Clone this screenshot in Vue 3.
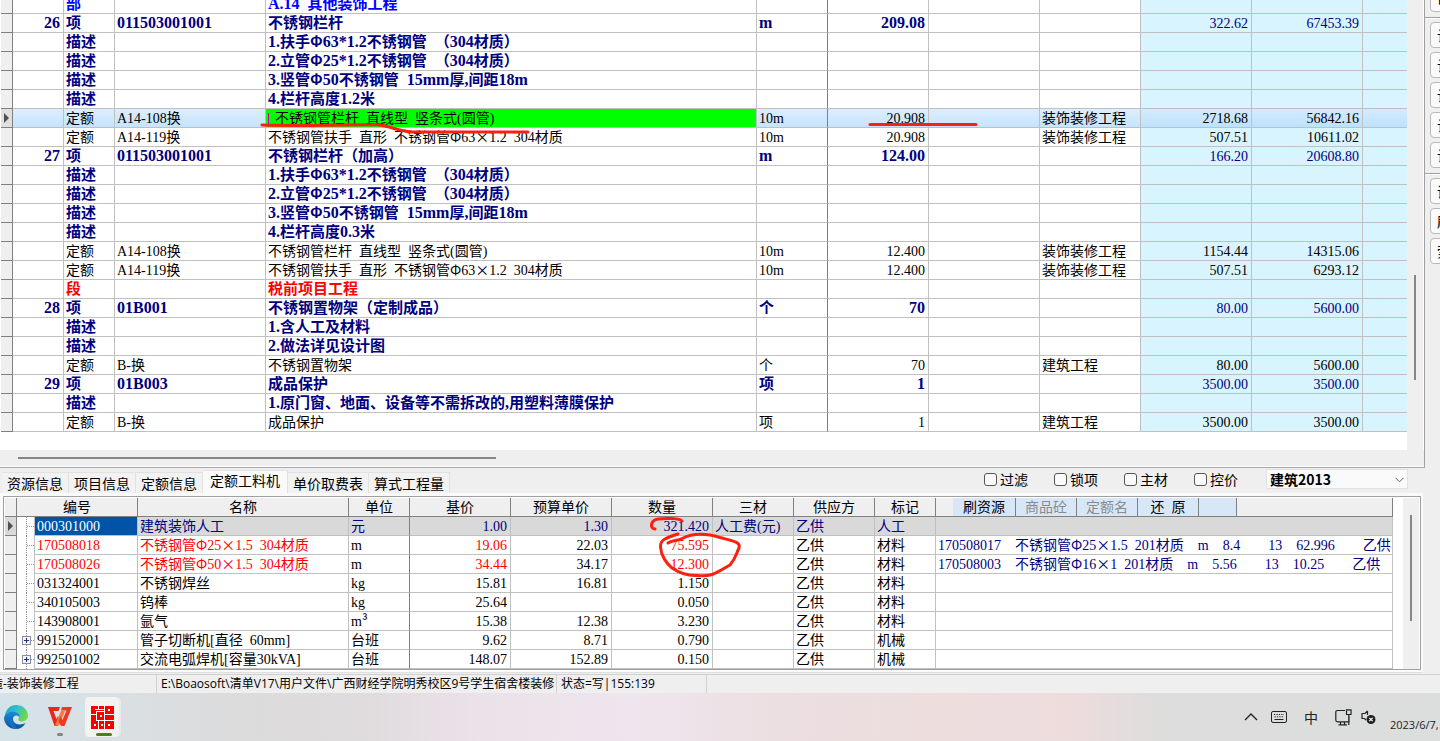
<script setup>
import { h, ref } from 'vue'

// Splits mixed text into Latin and Chinese runs so that each gets its own face.
const Mixed = (props) =>
  (props.t || '').match(/[ -~]+|[^ -~]+/g)?.map((run) =>
    h('span', { class: /^[ -~]/.test(run) ? 'latin' : 'han' }, run.replace(/ /g, '\u2002'))
  )
Mixed.props = ['t']

const item = (no, code, name, unit, qty, price, total) => ({ kind: 'item', no, type: '项', code, name, unit, qty, price, total })
const note = (name) => ({ kind: 'note', type: '描述', name })
const quota = (code, name, unit, qty, cls, price, total, active) => ({ kind: 'quota', type: '定额', code, name, unit, qty, cls, price, total, active })

const rows = [
  { kind: 'part', type: '部', name: 'A.14 其他装饰工程' },
  item('26', '011503001001', '不锈钢栏杆', 'm', '209.08', '322.62', '67453.39'),
  note('1.扶手Φ63*1.2不锈钢管 （304材质）'),
  note('2.立管Φ25*1.2不锈钢管 （304材质）'),
  note('3.竖管Φ50不锈钢管 15mm厚,间距18m'),
  note('4.栏杆高度1.2米'),
  quota('A14-108换', '不锈钢管栏杆 直线型 竖条式(圆管)', '10m', '20.908', '装饰装修工程', '2718.68', '56842.16', true),
  quota('A14-119换', '不锈钢管扶手 直形 不锈钢管Φ63×1.2 304材质', '10m', '20.908', '装饰装修工程', '507.51', '10611.02'),
  item('27', '011503001001', '不锈钢栏杆（加高）', 'm', '124.00', '166.20', '20608.80'),
  note('1.扶手Φ63*1.2不锈钢管 （304材质）'),
  note('2.立管Φ25*1.2不锈钢管 （304材质）'),
  note('3.竖管Φ50不锈钢管 15mm厚,间距18m'),
  note('4.栏杆高度0.3米'),
  quota('A14-108换', '不锈钢管栏杆 直线型 竖条式(圆管)', '10m', '12.400', '装饰装修工程', '1154.44', '14315.06'),
  quota('A14-119换', '不锈钢管扶手 直形 不锈钢管Φ63×1.2 304材质', '10m', '12.400', '装饰装修工程', '507.51', '6293.12'),
  { kind: 'section', type: '段', name: '税前项目工程' },
  item('28', '01B001', '不锈钢置物架（定制成品）', '个', '70', '80.00', '5600.00'),
  note('1.含人工及材料'),
  note('2.做法详见设计图'),
  quota('B-换', '不锈钢置物架', '个', '70', '建筑工程', '80.00', '5600.00'),
  item('29', '01B003', '成品保护', '项', '1', '3500.00', '3500.00'),
  note('1.原门窗、地面、设备等不需拆改的,用塑料薄膜保护'),
  quota('B-换', '成品保护', '项', '1', '建筑工程', '3500.00', '3500.00')
]

const tabs = ['资源信息', '项目信息', '定额信息', '定额工料机', '单价取费表', '算式工程量']
const activeTab = ref('定额工料机')
const filters = ['过滤', '锁项', '主材', '控价']
const heads = ['编号', '名称', '单位', '基价', '预算单价', '数量', '三材', '供应方', '标记']
const tools = [
  { t: '刷资源' },
  { t: '商品砼', off: true },
  { t: '定额名', off: true },
  { t: '还\u2002原' }
]

const parts = [
  { code: '000301000', name: '建筑装饰人工', unit: '元', base: '1.00', budget: '1.30', qty: '321.420', three: '人工费(元)', by: '乙供', tag: '人工', cur: true },
  { code: '170508018', name: '不锈钢管Φ25×1.5 304材质', unit: 'm', base: '19.06', budget: '22.03', qty: '75.595', by: '乙供', tag: '材料', red: true, alt: '170508017  不锈钢管Φ25×1.5 201材质  m  8.4    13  62.996    乙供' },
  { code: '170508026', name: '不锈钢管Φ50×1.5 304材质', unit: 'm', base: '34.44', budget: '34.17', qty: '12.300', by: '乙供', tag: '材料', red: true, alt: '170508003  不锈钢管Φ16×1 201材质  m  5.56    13  10.25    乙供' },
  { code: '031324001', name: '不锈钢焊丝', unit: 'kg', base: '15.81', budget: '16.81', qty: '1.150', by: '乙供', tag: '材料' },
  { code: '340105003', name: '钨棒', unit: 'kg', base: '25.64', budget: '', qty: '0.050', by: '乙供', tag: '材料' },
  { code: '143908001', name: '氩气', unit: 'm³', base: '15.38', budget: '12.38', qty: '3.230', by: '乙供', tag: '材料' },
  { code: '991520001', name: '管子切断机[直径 60mm]', unit: '台班', base: '9.62', budget: '8.71', qty: '0.790', by: '乙供', tag: '机械', node: true },
  { code: '992501002', name: '交流电弧焊机[容量30kVA]', unit: '台班', base: '148.07', budget: '152.89', qty: '0.150', by: '乙供', tag: '机械', node: true }
]

const sideGroups = [['审'], ['计', '计', '计', '计', '计'], ['调', '刷', '索']]
</script>

<template>
  <div class="app">
    <div class="upper">
      <div class="main-grid">
        <div class="main-row">
          <div class="sheet">
            <table class="bill">
              <colgroup>
                <col class="w12" /><col class="w51" /><col class="w51" /><col class="w151" /><col />
                <col class="w71" /><col class="w101" /><col class="w111" /><col class="w101" />
                <col class="w111" /><col class="w111" /><col class="w44" />
              </colgroup>
              <tbody>
                <tr v-for="(r, i) in rows" :key="i" :class="[r.kind, { active: r.active }]">
                  <td class="mark"><div class="c"><svg v-if="r.active" width="6" height="10" viewBox="0 0 6 10"><path d="M0 0L5 5L0 10Z" fill="#505050" /></svg></div></td>
                  <td class="r"><div class="c"><Mixed :t="r.no" /></div></td>
                  <td><div class="c">{{ r.type }}</div></td>
                  <td><div class="c"><Mixed :t="r.code" /></div></td>
                  <td class="name"><div class="c"><i v-if="r.active" class="caret"></i><Mixed :t="r.name" /></div></td>
                  <td class="dark"><div class="c"><Mixed :t="r.unit" /></div></td>
                  <td class="r"><div class="c"><Mixed :t="r.qty" /></div></td>
                  <td><div class="c"></div></td>
                  <td><div class="c">{{ r.cls }}</div></td>
                  <td class="r money"><div class="c"><Mixed :t="r.price" /></div></td>
                  <td class="r money"><div class="c"><Mixed :t="r.total" /></div></td>
                  <td class="money last"><div class="c"></div></td>
                </tr>
              </tbody>
            </table>
          </div>
          <div class="vbar"><div class="vthumb"></div></div>
        </div>
        <div class="hbar"><div class="hthumb"></div></div>
      </div>
      <aside class="side">
        <div v-for="(g, i) in sideGroups" :key="i" class="side-group">
          <button v-for="(b, j) in g" :key="j" type="button">{{ b }}</button>
        </div>
      </aside>
    </div>

    <div class="lower">
      <div class="tabbar">
        <div class="tabs" role="tablist">
          <button v-for="t in tabs" :key="t" type="button" role="tab" class="tab" :class="{ on: t === activeTab }" @click="activeTab = t">{{ t }}</button>
        </div>
        <div class="options">
          <label v-for="f in filters" :key="f"><input type="checkbox" />{{ f }}</label>
          <div class="combo">
            <select aria-label="定额库"><option>建筑2013</option></select>
            <svg width="9" height="6" viewBox="0 0 9 6"><path d="M.5 .8L4.5 4.8L8.5 .8" fill="none" stroke="#606060" /></svg>
          </div>
        </div>
      </div>
      <div class="frame">
        <div class="inner">
          <div class="parts-wrap">
            <table class="parts">
              <colgroup>
                <col class="w12" /><col class="w121" /><col class="w211" /><col class="w61" /><col class="w101" />
                <col class="w101" /><col class="w101" /><col class="w81" /><col class="w81" /><col class="w61" /><col />
              </colgroup>
              <thead>
                <tr>
                  <th></th>
                  <th v-for="t in heads" :key="t"><div class="c">{{ t }}</div></th>
                  <th class="tool-cell">
                    <div class="tools">
                      <button v-for="b in tools" :key="b.t" type="button" :disabled="b.off">{{ b.t }}</button>
                    </div>
                  </th>
                </tr>
              </thead>
              <tbody>
                <tr v-for="p in parts" :key="p.code" :class="{ cur: p.cur, red: p.red }">
                  <td class="mark"><div class="c"><svg v-if="p.cur" width="6" height="10" viewBox="0 0 6 10"><path d="M0 0L5 5L0 10Z" fill="#505050" /></svg></div></td>
                  <td class="code">
                    <div class="c">
                      <svg class="tree" width="18" height="19" viewBox="0 0 18 19" shape-rendering="crispEdges">
                        <path d="M9.5 0V19M10 9.5H17" stroke="#909090" stroke-dasharray="1 1" fill="none" />
                        <path d="M17.5 0V19" stroke="#c0c0c0" />
                        <g v-if="p.node"><rect x="5.500" y="5.500" width="8" height="8" fill="#f4f4f8" stroke="#8c8c9c" /><path d="M7 9.500H12M9.500 7V12" stroke="#203080" /></g>
                      </svg>
                      <span class="code-text"><Mixed :t="p.code" /></span>
                    </div>
                  </td>
                  <td class="tone"><div class="c"><Mixed :t="p.name" /></div></td>
                  <td class="dark"><div class="c"><Mixed :t="p.unit" /></div></td>
                  <td class="r tone"><div class="c"><Mixed :t="p.base" /></div></td>
                  <td class="r"><div class="c"><Mixed :t="p.budget" /></div></td>
                  <td class="r tone"><div class="c"><Mixed :t="p.qty" /></div></td>
                  <td><div class="c"><Mixed :t="p.three" /></div></td>
                  <td><div class="c">{{ p.by }}</div></td>
                  <td><div class="c">{{ p.tag }}</div></td>
                  <td class="alt"><div class="c"><Mixed :t="p.alt" /></div></td>
                </tr>
              </tbody>
            </table>
          </div>
          <div class="vbar2"><div class="vthumb2"></div></div>
        </div>
      </div>
    </div>

    <footer class="status">
      <div class="s1"><span>造-装饰装修工程</span></div>
      <div class="s2">E:\Boaosoft\清单V17\用户文件\广西财经学院明秀校区9号学生宿舍楼装修</div>
      <div class="s3">状态=写|155:139</div>
    </footer>

    <div class="taskbar">
      <div class="pins">
        <button type="button" aria-label="Edge">
          <svg width="24" height="24" viewBox="0 0 24 24">
            <defs>
              <linearGradient id="eg" x1="0" y1="0" x2="1" y2=".4"><stop offset="0" stop-color="#1ba0e0" /><stop offset=".6" stop-color="#36c3c0" /><stop offset="1" stop-color="#6fd84c" /></linearGradient>
              <linearGradient id="eb" x1="0" y1="0" x2="0" y2="1"><stop offset="0" stop-color="#1a8ad8" /><stop offset="1" stop-color="#0c52a0" /></linearGradient>
            </defs>
            <path d="M1 10C2 4 6.500 0 12 0C19 0 24 5 24 10.500C24 14 21 16.500 18 16.500C15 16.500 13.500 15 14.500 13.800C16.500 11 13 7.500 9 7.500C5 7.500 2 9.500 0 13Z" fill="url(#eg)" />
            <path d="M0 13C1.500 8.500 5 6.800 9 6.800C13 6.800 16 9.500 15.500 12C12 9 9 11 9 14C9 18 14 21.500 21.500 18C19.500 22 16 24 12 24C5 24 0 19 0 13Z" fill="url(#eb)" />
            <path d="M10 10.500C7 14 8 20 14 23.800C10 24.500 5 21 5 16C5 13 7 11 10 10.500Z" fill="#1673c4" />
          </svg>
        </button>
        <button type="button" aria-label="WPS">
          <svg width="24" height="20" viewBox="0 0 24 20">
            <path d="M0 0H12L10.500 4H5.500L8.500 12L10 9L12.500 14L9.500 19H6.500Z" fill="#e8281c" />
            <path d="M13 4H17L11 18.500H7L9.500 12Z" fill="#ff7a3c" />
            <path d="M14 0H24L16.500 19H13L10.500 14L12.500 9L14.500 13L18.500 3.500H13Z" fill="#ee3a20" />
          </svg>
          <i class="dot"></i>
        </button>
        <button type="button" class="current" aria-label="清单">
          <svg width="23" height="23" viewBox="0 0 23 23" shape-rendering="crispEdges">
            <path d="M0 0H23V23H0Z" fill="#f80000" />
            <path d="M7.500 0V4M4 3.500H14M13.500 0V5M5 5.500H14M5.500 5V14M0 8.500H5M13.500 5V23M14 8.500H23M5 14.500H23M7.500 14V23" fill="none" stroke="#fff" />
            <path d="M9 9H11V11H9ZM3 18H5V20H3ZM10 18H12V20H10ZM17 3H19V5H17ZM17 18H19V20H17Z" fill="#fff" />
          </svg>
          <i class="dot long"></i>
        </button>
      </div>
      <div class="tray">
        <svg width="14" height="8" viewBox="0 0 14 8"><path d="M1 7L7 1L13 7" fill="none" stroke="#222" stroke-width="1.400" /></svg>
        <svg class="kb" width="16" height="12" viewBox="0 0 16 12"><rect x=".5" y=".5" width="15" height="11" rx="1.500" fill="none" stroke="#222" /><path d="M3 3.500H13M3.500 5.800H13" stroke="#222" stroke-dasharray="1.200 1.200" /><path d="M3.500 8.500H12.500" stroke="#222" /></svg>
        <span class="ime">中</span>
        <svg class="net" width="17" height="17" viewBox="0 0 17 17"><path d="M10 1.500H2.500Q.8 1.500 .8 3V11Q.8 12.800 2.500 12.800H14V7M5.500 13V15.500M9.500 13V15.500M3.500 15.800H12M11.500 .8H16V5.500H11.500ZM13.800 5.500V16" fill="none" stroke="#222" stroke-width="1.200" /></svg>
        <svg class="vol" width="16" height="15" viewBox="0 0 16 15"><path d="M6.500 1L4 3.500H1V8.500H3.500L5 10M6.500 1V5" fill="none" stroke="#222" stroke-width="1.200" /><circle cx="10" cy="9.500" r="4.500" fill="#222" /><path d="M8.300 7.800L11.700 11.200M11.700 7.800L8.300 11.200" stroke="#fff" stroke-width="1.200" /></svg>
        <span class="date">2023/6/7,</span>
      </div>
    </div>

    <svg class="ink" width="1440" height="741" viewBox="0 0 1440 741">
      <path d="M262 125C300 126 345 125 376 124.500C390 126 398 131 412 132H528" />
      <path d="M870 124.500H976" />
      <path d="M655 529C649 528 651 520 658 519C665 518 680 518 682 521" />
      <path d="M678 534C665 538 660 540 660.500 547C661 556 667 564 672 568C681 574 688 576 697 575.500C712 577 716 573 730 565C736 558 736 554 739 548C741 542 733 541 720 537.500C705 533 691 534 682 538.500C677 541 672 540 668 543" />
    </svg>
  </div>
</template>

<style>
html, body { margin: 0; background: #efefef; overflow: hidden; }
</style>

<style scoped>
.app {
  position: relative;
  display: flex;
  flex-direction: column;
  min-height: 100vh;
  overflow: hidden;
  background: #efefef;
  color: #000;
  font: 14px/18px "Noto Sans CJK SC", sans-serif;
}
button { font: inherit; color: inherit; padding: 0; margin: 0; }
.upper { display: flex; }
.main-grid { flex: 1; min-width: 0; border-right: 1px solid #a0a0a0; border-bottom: 1px solid #a8a8a8; }
.main-row { display: flex; background: #fff; }
.sheet { flex: 1; min-width: 0; padding: 0 0 18px 1px; }
.bill { margin-top: -5px; }
table { width: 100%; table-layout: fixed; border-collapse: separate; border-spacing: 0; }
.w12 { width: 12px; } .w44 { width: 44px; } .w51 { width: 51px; } .w61 { width: 61px; }
.w71 { width: 71px; } .w81 { width: 81px; } .w101 { width: 101px; } .w111 { width: 111px; }
.w121 { width: 121px; } .w151 { width: 151px; } .w211 { width: 211px; }
td { padding: 0 3px 0 2px; border-right: 1px solid #c0c0c0; border-bottom: 1px solid #c0c0c0; }
.c { height: 18px; line-height: 16px; white-space: pre; }
.c :deep(.latin) { font-family: "Liberation Serif", serif; }
td.r { text-align: right; }
td.dark { border-right-color: #808080; }
td.mark { background: #efefef; border-color: #808080; padding: 0; }
.mark .c { display: flex; align-items: center; padding-left: 3px; }
.bill .money { background: #d8f4ff; }
.bill .last { border-right: 0; }
.item, .note, .part, .section { color: #000080; font-weight: 700; font-size: 15px; }
.item :deep(.latin), .note :deep(.latin), .part :deep(.latin), .section :deep(.latin) { font-size: 16px; }
.item .money { font-weight: 400; font-size: 14px; }
.item .money :deep(.latin) { font-size: 14px; }
.part { color: #0000ff; }
.section { color: #ff0000; }
.active td { background: linear-gradient(#dceeff, #c6e4fd); }
.active td.money { background: linear-gradient(#d4ebfd, #bde2fd); }
.active td.mark { background: #e0e0e0; }
.active td.name { background: #00ff00; }
.caret { display: inline-block; width: 6px; height: 13px; border-left: 1px solid #d000a0; vertical-align: middle; }
.vbar { width: 16px; background: #efefef; border-right: 1px solid #fff; }
.vthumb { width: 2px; height: 105px; margin: 275px 0 0 7px; background: #868686; }
.hbar { height: 16px; padding-left: 18px; border-bottom: 1px solid #fff; background: #efefef; display: flex; align-items: center; }
.hthumb { width: 34%; height: 2px; background: #868686; }
.side { width: 15px; overflow: hidden; height: 467px; }
.side-group { display: flex; flex-direction: column; gap: 4px; padding: 4px 0 5px 5px; border-bottom: 1px solid #a0a0a0; box-shadow: 0 1px #fff; }
.side-group:first-child { margin-top: -18px; }
.side-group:last-child { border: 0; box-shadow: none; }
.side-group button { width: 60px; height: 26px; border: 1px solid #b8b8b8; border-radius: 4px; background: #fbfbfb; text-align: left; padding-left: 6px; }
.lower { padding: 2px 0 1px; }
.tabbar { display: flex; justify-content: space-between; height: 23px; padding: 0 32px 0 2px; }
.tabs { display: flex; align-items: flex-end; }
.tab { height: 21px; padding: 0 5px; border: 1px solid #e2e2e2; border-width: 1px 1px 0 0; background: #f2f2f2; white-space: nowrap; line-height: 18px; }
.tab.on { height: 23px; padding: 0 7px 4px; background: #fafafa; }
.options { display: flex; gap: 26px; align-items: center; height: 18px; }
.options label { display: flex; align-items: center; gap: 3px; width: 44px; white-space: nowrap; }
.options input { appearance: none; width: 13px; height: 13px; margin: 0; border: 1px solid #555; border-radius: 3px; background: #fafafa; flex: none; }
.combo { position: relative; width: 142px; margin-left: 2px; }
.combo select { appearance: none; display: block; width: 100%; height: 20px; border: 1px solid #e2e2e2; border-radius: 0; background: #fafafa; padding: 0 4px 0 3px; color: #000; font: 700 14px/18px "Noto Sans CJK SC", sans-serif; }
.combo svg { position: absolute; right: 4px; top: 8px; }
.frame { margin-right: 17px; padding: 3px 2px 2px 3px; background: #fafafa; border-bottom: 1px solid #e0e0e0; }
.inner { display: flex; border: 1px solid #a0a0a0; background: #fff; height: 171px; padding: 1px 1px 0 1px; overflow: hidden; }
.parts-wrap { flex: 1; min-width: 0; overflow: hidden; }
th { height: 18px; padding: 0; font-weight: 400; background: #efefef; border-right: 1px solid #808080; border-bottom: 1px solid #808080; line-height: 18px; }
.tools { display: flex; box-sizing: border-box; width: 284px; height: 18px; margin-left: 17px; border-right: 1px solid #808080; background: #d8e7f8; }
.tools button { width: 61px; border: 0; border-right: 1px solid #808080; background: transparent; line-height: 16px; padding-bottom: 2px; white-space: pre; }
.tools button:first-child { width: 63px; }
.tools button:disabled { color: #8a8a8a; }
.parts td.code { padding: 0; }
.code .c { display: flex; }
.tree { flex: none; background: #fff; }
.code-text { flex: 1; padding-left: 2px; }
.red .tone, .red .code { color: #ff0000; }
.cur td { background: #d9d9d9; color: #000080; }
.cur .code-text { background: #0054a8; color: #fff; }
.alt { color: #000080; overflow: hidden; }
.vbar2 { width: 16px; margin-left: 10px; background: #efefef; }
.vthumb2 { width: 2px; height: 106px; margin: 17px 0 0 7px; background: #868686; }
.status { display: flex; height: 18px; border-top: 1px solid #d0d0d0; font: 12px/18px "Open Sans", "Noto Sans CJK SC", sans-serif; white-space: nowrap; }
.status div { box-sizing: border-box; overflow: hidden; border-right: 1px solid #d0d0d0; height: 18px; }
.s1 { width: 157px; display: flex; justify-content: flex-start; }
.s1 span { margin-left: -9px; }
.s2 { width: 400px; padding-left: 4px; }
.s3 { width: 150px; padding-left: 4px; }
.taskbar { flex: 1; min-height: 48px; display: flex; justify-content: space-between; background: linear-gradient(90deg, #d4e3e9 0, #dadfe1 9%, #dcdbdb 18%, #dfdcdd 25%, #ebe1e9 33%, #efe5ee 44%, #ecdfe1 54%, #eddddd 66%, #eedcdd 74%, #dcdddc 81%, #dcdddd 100%); }
.pins { display: flex; gap: 4px; }
.pins button { display: flex; align-items: center; justify-content: center; position: relative; width: 36px; height: 40px; margin-top: 4px; border: 0; background: transparent; }
.pins button:first-child { width: 32px; }
.pins button:nth-child(2) { width: 48px; }
.pins button.current { width: 34px; margin-left: -3px; border-radius: 4px; background: #f2f2f1; box-shadow: 3px 0 0 -1px #e6ebeb; }
.dot { position: absolute; bottom: 1px; left: 50%; width: 6px; height: 3px; margin-left: -3px; border-radius: 2px; background: #808487; }
.dot.long { width: 16px; margin-left: -6px; background: #4b8208; }
.tray { display: flex; align-items: center; width: 196px; color: #222; white-space: nowrap; }
.kb { margin-left: 13px; }
.ime { margin-left: 17px; }
.net { margin-left: 17px; flex: none; }
.vol { margin-left: 9px; flex: none; }
.date { margin: 16px 0 0 13px; font: 11px/16px "Open Sans", sans-serif; }
.ink { position: absolute; left: 0; top: 0; pointer-events: none; }
.ink path { fill: none; stroke: #fb2010; stroke-width: 3; stroke-linecap: round; stroke-linejoin: round; }
</style>
